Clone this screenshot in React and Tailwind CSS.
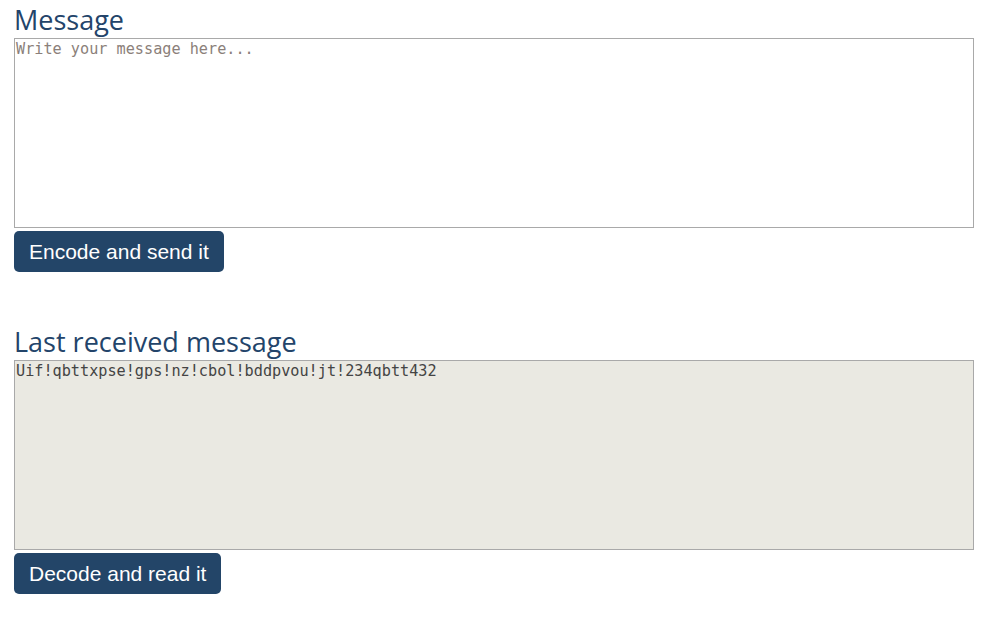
import React from 'react';

const headCls = "h-[38px] pt-[3px] text-[27px] leading-[34px] text-[#23446a] font-['Open_Sans',sans-serif]";
const areaCls = "block w-[960px] h-[190px] border border-[#a9a9a9] px-[1px] pt-[1px] resize-none outline-none font-['DejaVu_Sans_Mono',monospace] text-[15.2px] leading-[18px] text-[#444] placeholder-[#8b7f7a]";
const btnCls = "mt-[3px] h-[41px] px-[15px] rounded-[5px] bg-[#234568] text-white text-[21px] font-['Liberation_Sans',Arial,sans-serif]";

export default function App() {
  return (
    <main className="px-[14px] bg-white min-h-[638px]">
      <h2 className={headCls}>Message</h2>
      <textarea className={`${areaCls} bg-white`} placeholder="Write your message here..." />
      <button className={btnCls}>Encode and send it</button>

      <h2 className={`${headCls} mt-[50px]`}>Last received message</h2>
      <textarea
        className={`${areaCls} bg-[#eae9e2]`}
        readOnly
        defaultValue="Uif!qbttxpse!gps!nz!cbol!bddpvou!jt!234qbtt432"
      />
      <button className={btnCls}>Decode and read it</button>
    </main>
  );
}
